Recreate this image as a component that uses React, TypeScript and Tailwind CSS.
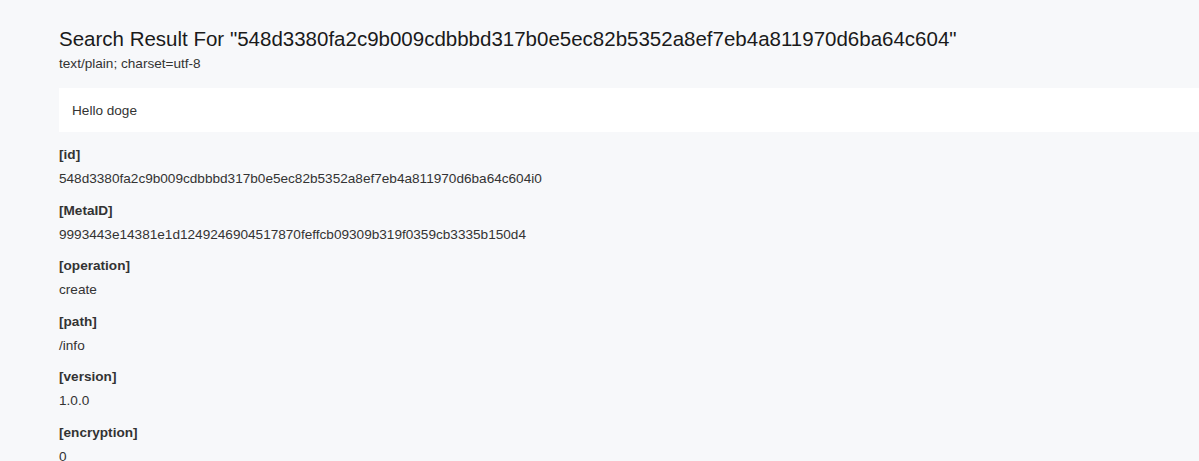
const fields: { label: string; value: string }[] = [
  { label: 'id', value: '548d3380fa2c9b009cdbbbd317b0e5ec82b5352a8ef7eb4a811970d6ba64c604i0' },
  { label: 'MetaID', value: '9993443e14381e1d1249246904517870feffcb09309b319f0359cb3335b150d4' },
  { label: 'operation', value: 'create' },
  { label: 'path', value: '/info' },
  { label: 'version', value: '1.0.0' },
  { label: 'encryption', value: '0' },
];

export default function App() {
  return (
    <main
      className="h-[461px] overflow-hidden bg-[#f7f8fa] pl-[59px] pt-[24px] text-[#222]"
      style={{ fontFamily: '"Liberation Sans", Arial, sans-serif' }}
    >
      <h1 className="text-[20.5px] leading-[30px] font-normal text-[#1a1a1a]">
        Search Result For "548d3380fa2c9b009cdbbbd317b0e5ec82b5352a8ef7eb4a811970d6ba64c604"
      </h1>
      <p className="text-[13.6px] leading-5 text-[#333]">text/plain; charset=utf-8</p>

      <div className="mt-[14px] flex h-[44px] items-center bg-white pl-[13px] pt-[2px] text-[13.6px] text-[#333]">
        Hello doge
      </div>

      <div className="mt-[11px] flex flex-col">
        {fields.map((f) => (
          <div key={f.label} className="flex h-[55.5px] flex-col">
            <div className="text-[13.6px] leading-[24px] font-semibold text-[#333]">[{f.label}]</div>
            <div className="text-[13.6px] leading-[24px] text-[#333]">{f.value}</div>
          </div>
        ))}
      </div>
    </main>
  );
}
